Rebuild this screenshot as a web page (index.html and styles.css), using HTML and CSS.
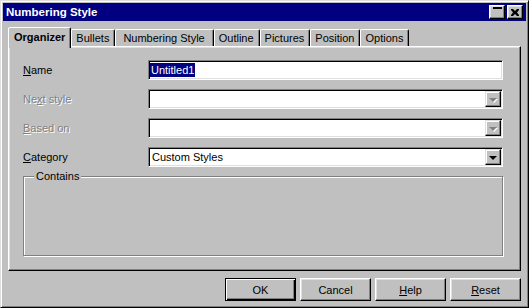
FILE: index.html
```html
<!DOCTYPE html>
<html lang="en">
<head>
  <meta charset="UTF-8" />
  <title>Numbering Style</title>
  <link rel="stylesheet" href="styles.css">
</head>
<body>
  <div class="window">
    <div class="titlebar">
      <span class="title">Numbering Style</span>
      <div class="title-buttons">
        <button class="title-btn max"><span class="max-glyph"></span></button>
        <button class="title-btn">
          <svg width="8" height="7" viewBox="0 0 8 7">
            <path d="M0 0h2l2 2 2-2h2v1l-2 2.5 2 2.5v1h-2l-2-2-2 2h-2v-1l2-2.5-2-2.5z" fill="#000"/>
          </svg>
        </button>
      </div>
    </div>

    <div class="tabs">
      <div class="tab active">Organizer</div>
      <div class="tab">Bullets</div>
      <div class="tab wide">Numbering Style</div>
      <div class="tab">Outline</div>
      <div class="tab">Pictures</div>
      <div class="tab">Position</div>
      <div class="tab">Options</div>
    </div>

    <div class="panel">
      <div class="form-grid">
        <label class="field-label"><u>N</u>ame</label>
        <div class="field"><span class="selected-text">Untitled1</span></div>

        <label class="field-label disabled">Ne<u>x</u>t style</label>
        <div class="field combo">
          <span class="combo-text"></span>
          <span class="combo-btn disabled"><span class="arrow"></span></span>
        </div>

        <label class="field-label disabled"><u>B</u>ased on</label>
        <div class="field combo">
          <span class="combo-text"></span>
          <span class="combo-btn disabled"><span class="arrow"></span></span>
        </div>

        <label class="field-label"><u>C</u>ategory</label>
        <div class="field combo">
          <span class="combo-text">Custom Styles</span>
          <span class="combo-btn"><span class="arrow"></span></span>
        </div>
      </div>

      <div class="groupbox">
        <span class="group-label">Contains</span>
      </div>
    </div>

    <div class="actions">
      <button class="btn default">OK</button>
      <button class="btn">Cancel</button>
      <button class="btn"><u>H</u>elp</button>
      <button class="btn"><u>R</u>eset</button>
    </div>
  </div>
</body>
</html>
```

FILE: styles.css
```css
* {
  box-sizing: border-box;
}
body {
  margin: 0;
  font-family: "Liberation Sans", Arial, sans-serif;
  font-size: 11px;
  background-color: #c0c0c0;
  color: #000;
}
.window {
  width: 529px;
  height: 308px;
  padding: 2px;
  border: 1px solid;
  border-color: #dfdfdf #000 #000 #dfdfdf;
  box-shadow: inset 1px 1px #fff, inset -1px -1px #808080;
  background-color: #c0c0c0;
  display: flex;
  flex-direction: column;
}

/* title bar */
.titlebar {
  height: 18px;
  background-color: #000080;
  color: #fff;
  display: flex;
  align-items: center;
  justify-content: space-between;
  padding: 0 3px 0 3px;
}
.title {
  font-weight: bold;
  font-size: 11.5px;
}
.title-buttons {
  display: flex;
  gap: 2px;
}
.title-btn {
  width: 16px;
  height: 14px;
  padding: 0;
  background-color: #c0c0c0;
  border: 1px solid;
  border-color: #fff #000 #000 #fff;
  box-shadow: inset -1px -1px #808080, inset 1px 1px #dfdfdf;
  display: flex;
  align-items: center;
  justify-content: center;
}
.title-btn.max {
  align-items: flex-start;
  padding-top: 1px;
}
.max-glyph {
  width: 9px;
  height: 2px;
  background-color: #000;
}

/* tabs */
.tabs {
  display: flex;
  align-items: flex-end;
  height: 19px;
  margin: 6px 5px 0;
  position: relative;
  z-index: 1;
}
.tab {
  height: 17px;
  padding: 0 5px 0 4px;
  border: 1px solid;
  border-bottom: none;
  border-color: #fff #000 transparent #fff;
  border-radius: 2px 2px 0 0;
  box-shadow: inset -1px 0 #808080;
  display: flex;
  align-items: center;
  white-space: nowrap;
}
.tab.wide {
  padding: 0 8px 0 7px;
}
.tab.active {
  height: 21px;
  margin-bottom: -2px;
  padding: 0 5px 2px 5px;
  font-weight: bold;
  background-color: #c0c0c0;
}

/* tab page */
.panel {
  flex: 1;
  margin: 0 5px;
  padding: 13px 17px 0 14px;
  border: 1px solid;
  border-color: #fff #000 #000 #fff;
  box-shadow: inset -1px -1px #808080, inset 1px 1px #dfdfdf;
}
.form-grid {
  display: grid;
  grid-template-columns: 125px 1fr;
  grid-auto-rows: 20px;
  row-gap: 9px;
  align-items: center;
}
.field-label.disabled {
  color: #808080;
  text-shadow: 1px 1px 0 #fff;
}
.field {
  height: 20px;
  background-color: #fff;
  border: 1px solid;
  border-color: #808080 #fff #fff #808080;
  box-shadow: inset 1px 1px #000, inset -1px -1px #dfdfdf;
  display: flex;
  align-items: center;
  padding: 0 1px 0 1px;
}
.selected-text {
  background-color: #000080;
  color: #fff;
  line-height: 14px;
  padding: 0 1px;
}
.combo-text {
  flex: 1;
  padding-left: 2px;
}
.combo-btn {
  width: 16px;
  height: 16px;
  background-color: #c0c0c0;
  border: 1px solid;
  border-color: #dfdfdf #000 #000 #dfdfdf;
  box-shadow: inset -1px -1px #808080, inset 1px 1px #fff;
  display: flex;
  align-items: center;
  justify-content: center;
}
.arrow {
  width: 0;
  height: 0;
  border-left: 4px solid transparent;
  border-right: 4px solid transparent;
  border-top: 4px solid #000;
  margin-top: 1px;
}
.combo-btn.disabled .arrow {
  border-top-color: #808080;
  filter: drop-shadow(1px 1px 0 #fff);
}

/* group box */
.groupbox {
  position: relative;
  margin-top: 9px;
  height: 80px;
  border: 1px solid #808080;
  box-shadow: inset 1px 1px #fff, 1px 1px #fff;
}
.group-label {
  position: absolute;
  top: -7px;
  left: 10px;
  padding: 0 2px;
  line-height: 13px;
  background-color: #c0c0c0;
}

/* dialog buttons */
.actions {
  display: flex;
  justify-content: flex-end;
  gap: 4px;
  margin: 7px 5px 4px;
}
.btn {
  width: 71px;
  height: 23px;
  padding: 0;
  font: inherit;
  color: #000;
  background-color: #c0c0c0;
  border: 1px solid;
  border-color: #fff #000 #000 #fff;
  box-shadow: inset -1px -1px #808080, inset 1px 1px #dfdfdf;
}
.btn.default {
  border-color: #000;
  box-shadow: inset 1px 1px #fff, inset -1px -1px #000, inset -2px -2px #808080;
}
```
